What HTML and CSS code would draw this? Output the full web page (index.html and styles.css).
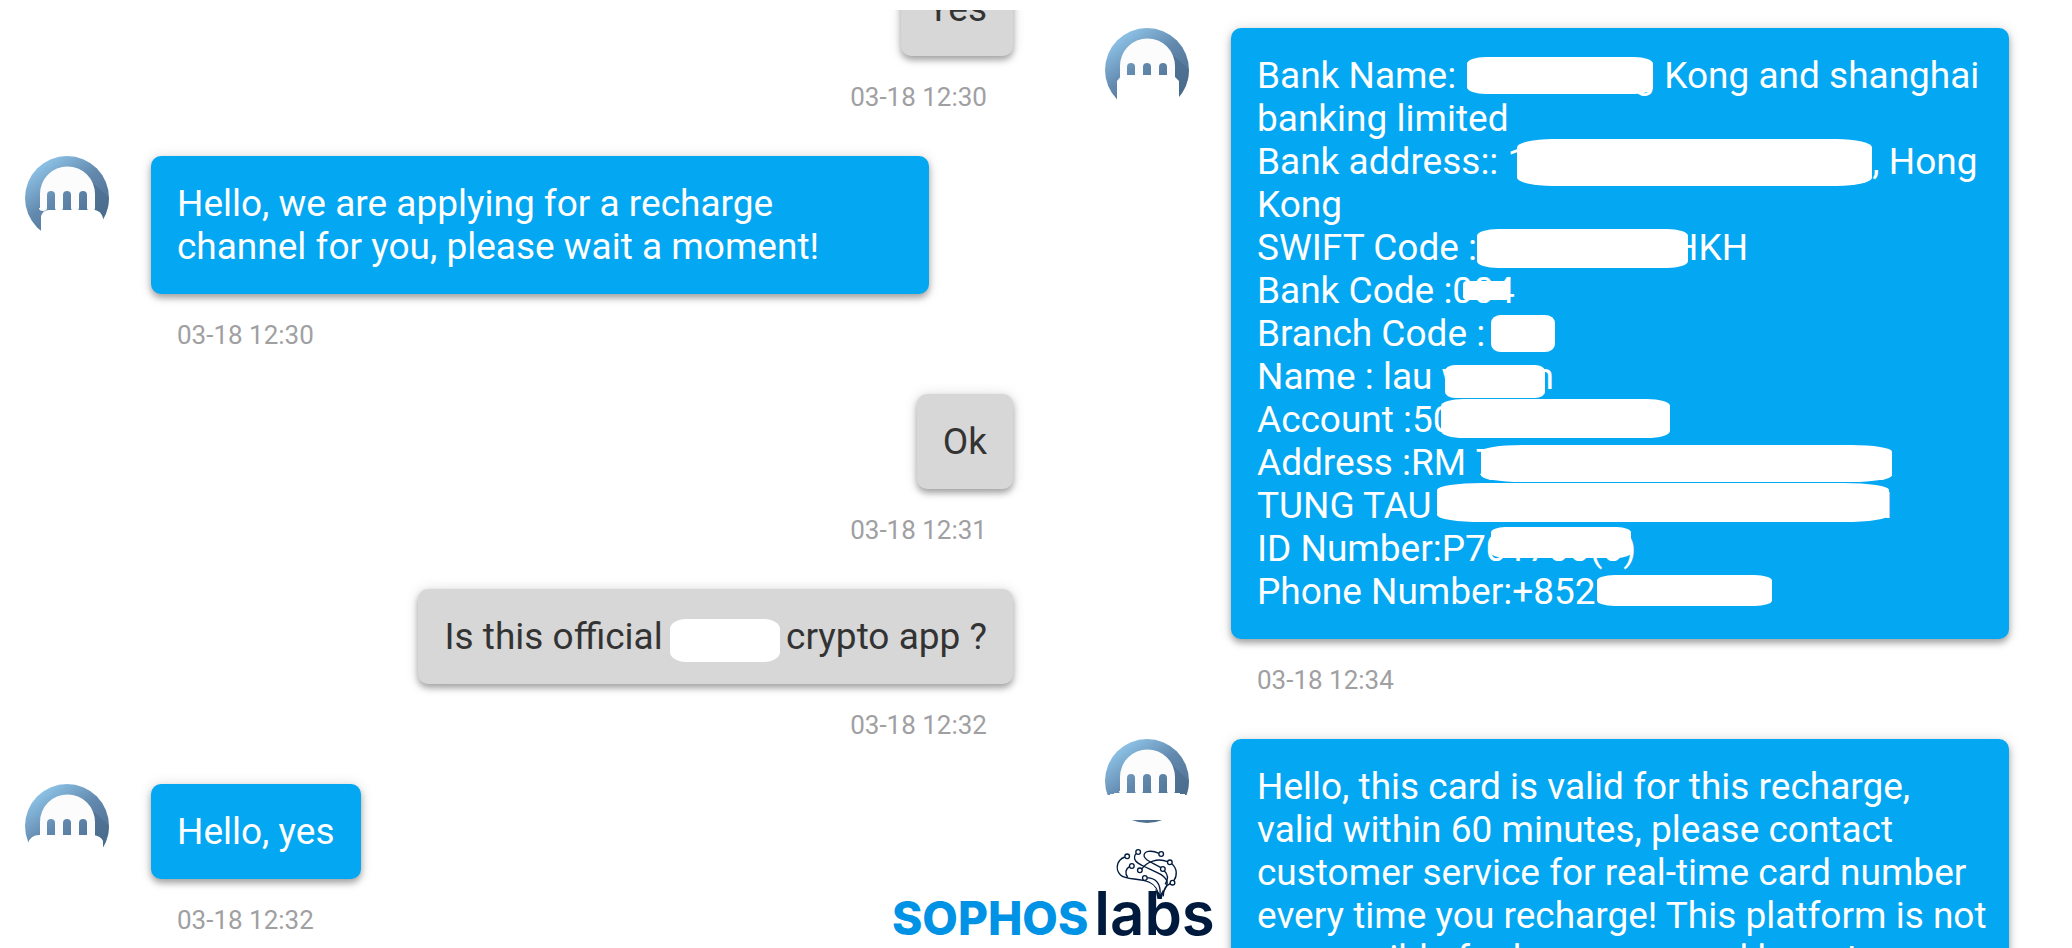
FILE: index.html
```html
<!DOCTYPE html>
<html lang="en">
<head>
    <meta charset="UTF-8">
    <meta name="viewport" content="width=device-width, initial-scale=1.0">
    <title>Customer service chat</title>
    <link rel="stylesheet" href="styles.css">
</head>
<body>

<svg class="defs" aria-hidden="true">
    <defs>
        <linearGradient id="avatarFill" x1="0.2" y1="0.05" x2="0.8" y2="0.9">
            <stop offset="0" stop-color="#8fc6ea"/>
            <stop offset="0.45" stop-color="#6389ae"/>
            <stop offset="1" stop-color="#496a8b"/>
        </linearGradient>
        <symbol id="avatar" viewBox="0 0 84 84">
            <circle cx="42" cy="42" r="42" fill="url(#avatarFill)"/>
            <path d="M63 22L84 42A42 42 0 0 1 70 73V45Z" fill="#48698a" opacity="0.5"/>
            <path d="M15 52V38a27 27 0 0 1 55 0v14q0 3-4 3t-4-3V39a4 4 0 0 0-8 0v13q0 3-4 3t-4-3V39a4 4 0 0 0-8 0v13q0 3-4 3t-4-3V39a4 4 0 0 0-8 0v13q0 3-4 3t-4-3Z" fill="#fcfcfc"/>
        </symbol>
    </defs>
</svg>

<main class="chats">
    <section class="chat chat-cut">
        <div class="message sent">
            <p class="bubble">Yes</p>
            <time>03-18 12:30</time>
        </div>

        <div class="message received">
            <svg class="avatar" viewBox="0 0 84 84">
                <use href="#avatar"/>
                <path d="M16 84V60Q18 54 24 54H70Q76 55 78 62V84Z" fill="#fff"/>
            </svg>
            <p class="bubble">Hello, we are applying for a recharge channel for you, please wait a moment!</p>
            <time>03-18 12:30</time>
        </div>

        <div class="message sent">
            <p class="bubble">Ok</p>
            <time>03-18 12:31</time>
        </div>

        <div class="message sent">
            <p class="bubble">Is this official <span class="gap gap-app"></span> crypto app ?<span class="mask mask-app"></span></p>
            <time>03-18 12:32</time>
        </div>

        <div class="message received">
            <svg class="avatar" viewBox="0 0 84 84">
                <use href="#avatar"/>
                <path d="M3 84V59Q6 51 14 51H68Q76 52 78 57V84Z" fill="#fff"/>
            </svg>
            <p class="bubble">Hello, yes</p>
            <time>03-18 12:32</time>
        </div>
    </section>

    <section class="chat chat-bank">
        <div class="message received">
            <svg class="avatar" viewBox="0 0 84 84">
                <use href="#avatar"/>
                <path d="M12 84V53L17 47H68L74 53V84Z" fill="#fff"/>
            </svg>
            <p class="bubble">
                Bank Name: <span class="gap gap-name"></span>g Kong and shanghai banking limited<br>
                Bank address:: 1<span class="gap gap-street"></span>, Hong Kong<br>
                SWIFT Code :<span class="gap gap-swift"></span>HKH<br>
                Bank Code :004<br>
                Branch Code :<br>
                Name : lau w<span class="gap gap-holder"></span>n<br>
                Account :50<br>
                Address :RM 7<br>
                TUNG TAU<span class="gap gap-estate"></span>I<br>
                ID Number:P701700(0)<br>
                Phone Number:+852
                <span class="mask mask-name"></span>
                <span class="mask mask-street"></span>
                <span class="mask mask-swift"></span>
                <span class="mask mask-code"></span>
                <span class="mask mask-branch"></span>
                <span class="mask mask-holder"></span>
                <span class="mask mask-account"></span>
                <span class="mask mask-address"></span>
                <span class="mask mask-estate"></span>
                <span class="mask mask-id"></span>
                <span class="mask mask-phone"></span>
            </p>
            <time>03-18 12:34</time>
        </div>

        <div class="message received">
            <svg class="avatar" viewBox="0 0 84 84">
                <use href="#avatar"/>
                <path d="M0 56H5V55H9V54H75V55H80V56H84V81H0Z" fill="#fff"/>
            </svg>
            <p class="bubble bubble-long">Hello, this card is valid for this recharge, valid within 60 minutes, please contact customer service for real-time card number every time you recharge! This platform is not responsible for losses caused by not contacting customer service!</p>
        </div>
    </section>

    <div class="logo">
        <span class="logo-sophos">SOPHOS</span><span class="logo-labs">labs</span>
        <svg class="logo-brain" viewBox="700 80 200 156" fill="none" stroke="#001a3d" stroke-width="4">
            <path d="M735 110C712 118 704 146 722 164C735 177 765 174 790 180C818 186 830 197 835 218"/>
            <path d="M750 138C736 146 735 160 744 172"/>
            <path d="M768 100C756 118 772 128 790 137C818 151 858 162 862 186C863 200 852 208 846 224"/>
            <path d="M837 99C815 88 789 92 793 108C797 122 826 130 843 142"/>
            <path d="M786 146C800 124 834 112 863 124"/>
            <path d="M876 130C892 144 893 166 882 181"/>
            <path d="M802 172C828 174 842 190 841 220"/>
            <path d="M853 151C868 164 862 182 856 192"/>
            <path d="M872 189C856 196 852 206 850 228"/>
            <g fill="#fff">
                <circle cx="742" cy="108" r="7"/>
                <circle cx="775" cy="95" r="7"/>
                <circle cx="844" cy="101" r="7"/>
                <circle cx="756" cy="137" r="7"/>
                <circle cx="780" cy="150" r="7"/>
                <circle cx="870" cy="126" r="7"/>
                <circle cx="849" cy="146" r="7"/>
                <circle cx="795" cy="173" r="7"/>
                <circle cx="878" cy="187" r="7"/>
            </g>
            <path d="M826 206L833 236H846L851 206L842 222Z" fill="#001a3d" stroke="none"/>
        </svg>
    </div>
</main>

</body>
</html>
```
FILE: styles.css
```css
* {
    box-sizing: border-box;
}

body {
    margin: 0;
    background: #fff;
    font-family: Roboto, "Liberation Sans", sans-serif;
}

.defs {
    position: absolute;
    width: 0;
    height: 0;
}

.chats {
    position: relative;
    display: grid;
    grid-template-columns: 1080fr 992fr;
    grid-template-rows: minmax(0, 1fr);
    height: 100vh;
    overflow: hidden;
}

.chat {
    display: flex;
    flex-direction: column;
    gap: 44px;
    min-width: 0;
    padding: 0 63px 0 25px;
}

/* scrolled so that the first bubble is cut by the top edge */
.chat-cut {
    justify-content: flex-end;
    margin-top: 10px;
    padding-right: 67px;
    padding-bottom: 13px;
    overflow: hidden;
}

.chat-bank {
    padding-top: 28px;
}

.message {
    display: grid;
    flex-shrink: 0;
    row-gap: 26px;
}

.sent {
    justify-items: end;
}

.received {
    grid-template-columns: 84px minmax(0, 778px);
    column-gap: 42px;
    justify-items: start;
}

.avatar {
    display: block;
    width: 84px;
    height: 84px;
}

.bubble {
    position: relative;
    margin: 0;
    padding: 26px;
    border-radius: 10px;
    box-shadow: 0 4px 6px rgba(0, 0, 0, 0.3), 0 1px 14px rgba(0, 0, 0, 0.14);
    font-size: 37px;
    line-height: 43px;
}

.bubble-long {
    padding-right: 16px;
}

.sent .bubble {
    background: #d7d7d7;
    color: #333;
}

.received .bubble {
    background: #04a7f2;
    color: #fff;
}

time {
    padding: 0 26px;
    color: #a0a0a3;
    font-size: 26px;
    line-height: 30px;
}

.received time {
    grid-column: 2;
}

/* blanked out parts: .gap keeps the room in the line, .mask is painted on top */
.gap {
    display: inline-block;
}

.gap-app { width: 105px; }
.gap-name { width: 169px; }
.gap-street { width: 344px; }
.gap-swift { width: 195px; }
.gap-holder { width: 64px; }
.gap-estate { width: 451px; }

.mask {
    position: absolute;
    background: #fff;
    border-radius: 10% / 18%;
}

.mask-app { left: 252px; top: 30px; width: 110px; height: 43px; border-radius: 16px / 10px; }
.mask-name { left: 236px; top: 29px; width: 186px; height: 37px; }
.mask-street { left: 286px; top: 111px; width: 355px; height: 47px; }
.mask-swift { left: 246px; top: 201px; width: 211px; height: 39px; }
.mask-code { left: 232px; top: 253px; width: 47px; height: 19px; }
.mask-branch { left: 260px; top: 287px; width: 64px; height: 37px; border-radius: 10px / 8px; }
.mask-holder { left: 214px; top: 337px; width: 100px; height: 33px; }
.mask-account { left: 210px; top: 371px; width: 229px; height: 39px; }
.mask-address { left: 250px; top: 417px; width: 411px; height: 37px; }
.mask-estate { left: 206px; top: 455px; width: 452px; height: 39px; }
.mask-id { left: 260px; top: 499px; width: 140px; height: 31px; }
.mask-phone { left: 366px; top: 547px; width: 175px; height: 31px; }

.logo {
    position: absolute;
    left: 892px;
    bottom: 0;
    display: flex;
    align-items: baseline;
    gap: 6px;
    line-height: 60px;
    white-space: nowrap;
}

.logo-sophos {
    color: #0092e4;
    font-family: Inter, "Liberation Sans", sans-serif;
    font-size: 46px;
    font-weight: 800;
}

.logo-labs {
    color: #001a3d;
    font-family: Inter, "Liberation Sans", sans-serif;
    font-size: 60px;
    font-weight: 600;
}

.logo-brain {
    position: absolute;
    left: 221px;
    bottom: 49px;
    width: 67px;
    height: 52px;
}
```
